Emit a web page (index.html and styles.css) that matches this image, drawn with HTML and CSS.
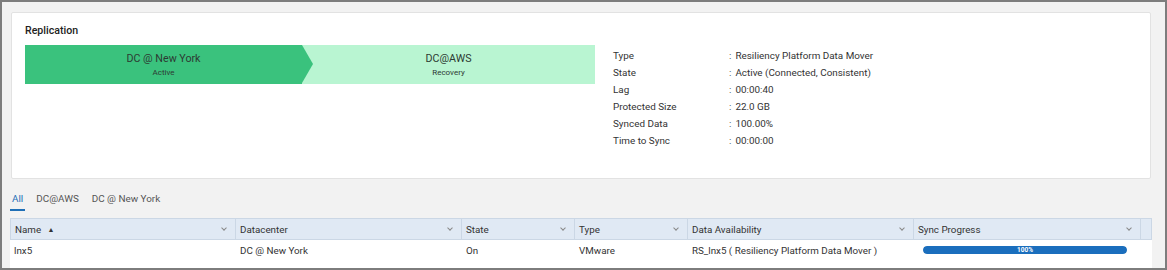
FILE: index.html
```html
<!DOCTYPE html>
<html lang="en">

<head>
    <meta charset="UTF-8">
    <meta name="viewport" content="width=device-width, initial-scale=1.0">
    <title>Replication</title>
    <link rel="stylesheet" href="styles.css">
</head>

<body>
    <div class="screen">
        <div class="card">
            <h3 class="card-title">Replication</h3>
            <div class="card-body">
                <div class="flow">
                    <div class="site site-active">
                        <span class="site-name">DC @ New York</span>
                        <span class="site-role">Active</span>
                    </div>
                    <div class="site site-recovery">
                        <span class="site-name">DC@AWS</span>
                        <span class="site-role">Recovery</span>
                    </div>
                </div>
                <dl class="details">
                    <div class="detail"><dt>Type</dt><dd>Resiliency Platform Data Mover</dd></div>
                    <div class="detail"><dt>State</dt><dd>Active (Connected, Consistent)</dd></div>
                    <div class="detail"><dt>Lag</dt><dd>00:00:40</dd></div>
                    <div class="detail"><dt>Protected Size</dt><dd>22.0 GB</dd></div>
                    <div class="detail"><dt>Synced Data</dt><dd>100.00%</dd></div>
                    <div class="detail"><dt>Time to Sync</dt><dd>00:00:00</dd></div>
                </dl>
            </div>
        </div>

        <ul class="tabs">
            <li class="tab active">All</li>
            <li class="tab">DC@AWS</li>
            <li class="tab">DC @ New York</li>
        </ul>

        <div class="grid">
            <div class="th">Name <span class="sort">&#9650;</span><span class="chev"></span></div>
            <div class="th">Datacenter<span class="chev"></span></div>
            <div class="th">State<span class="chev"></span></div>
            <div class="th">Type<span class="chev"></span></div>
            <div class="th">Data Availability<span class="chev"></span></div>
            <div class="th">Sync Progress<span class="chev"></span></div>
            <div class="th th-end"></div>

            <div class="td">lnx5</div>
            <div class="td">DC @ New York</div>
            <div class="td">On</div>
            <div class="td">VMware</div>
            <div class="td">RS_lnx5 ( Resiliency Platform Data Mover )</div>
            <div class="td">
                <div class="progress"><div class="progress-fill" style="width: 100%">100%</div></div>
            </div>
            <div class="td"></div>
        </div>
    </div>
</body>

</html>
```

FILE: styles.css
```css
*,
*:before,
*:after {
    box-sizing: border-box;
    margin: 0;
    padding: 0;
}

html,
body {
    width: 100%;
    height: 100%;
    overflow: hidden;
}

body {
    font-family: Roboto, "Liberation Sans", sans-serif;
    color: #333;
}

.screen {
    width: 1167px;
    height: 270px;
    border: 2px solid #7d7d7d;
    background: #f2f2f2;
    padding: 10px 13px 0 8px;
    overflow: hidden;
}

.card {
    margin: 0 1px;
    height: 167px;
    background: #fff;
    border: 1px solid #e2e2e2;
    border-radius: 2px;
    padding: 10px 13px 0;
}

.card-title {
    font-size: 10.6px;
    line-height: 16px;
    font-weight: 500;
    color: #222;
    margin-bottom: 6px;
}

.card-body {
    display: flex;
    align-items: flex-start;
}

.flow {
    display: flex;
    width: 570px;
    height: 39px;
}

.site {
    position: relative;
    display: flex;
    flex-direction: column;
    align-items: center;
    justify-content: center;
    color: #2d3a33;
}

.site-active {
    width: 277px;
    background: #3ac27d;
    z-index: 1;
}

.site-active:after {
    content: "";
    position: absolute;
    top: 0;
    left: 100%;
    border-top: 19.5px solid transparent;
    border-bottom: 19.5px solid transparent;
    border-left: 11px solid #3ac27d;
}

.site-recovery {
    flex: 1;
    background: #b9f5d2;
}

.site-name {
    font-size: 10.7px;
    line-height: 14px;
    margin-bottom: 1px;
}

.site-role {
    font-size: 8px;
    line-height: 11px;
}

.details {
    margin-left: 18px;
    padding-top: 2px;
    font-size: 9.9px;
    line-height: 17px;
    color: #333;
}

.detail {
    display: flex;
}

.detail dt {
    width: 116px;
}

.detail dd:before {
    content: ":";
    margin-right: 4px;
}

.tabs {
    list-style: none;
    display: flex;
    gap: 9px;
    margin-top: 12px;
    font-size: 9.9px;
    line-height: 16px;
    color: #555;
}

.tab {
    padding: 0 2px 2px;
    border-bottom: 2px solid transparent;
}

.tab.active {
    color: #1f6fb6;
    border-bottom-color: #1f6fb6;
}

.grid {
    display: grid;
    grid-template-columns: 226px 226px 113px 113px 226px 227px 11px;
    margin-top: 7px;
    font-size: 9.8px;
    color: #333;
}

.th {
    position: relative;
    height: 22px;
    line-height: 21px;
    padding: 0 4px;
    background: #e0e9f4;
    border-top: 1px solid #cbd7e5;
    border-bottom: 1px solid #cbd7e5;
    border-right: 1px solid #cbd7e5;
}

.th:first-child {
    border-left: 1px solid #cbd7e5;
}

.sort {
    font-size: 7px;
    vertical-align: 1px;
    margin-left: 4px;
    color: #333;
}

.chev {
    position: absolute;
    right: 9px;
    top: 7px;
    width: 4px;
    height: 4px;
    border-right: 1px solid #888;
    border-bottom: 1px solid #888;
    transform: rotate(45deg);
}

.td {
    height: 30px;
    line-height: 21px;
    padding: 0 4px;
    background: #fff;
}

.progress {
    margin: 6px 0 0 5px;
    width: 204px;
    height: 8px;
    border-radius: 4px;
    background: #e4e4e4;
    overflow: hidden;
}

.progress-fill {
    height: 100%;
    border-radius: 4px;
    background: #1a6ebd;
    color: #fff;
    font-size: 6.5px;
    font-weight: 700;
    line-height: 8px;
    text-align: center;
}
```
